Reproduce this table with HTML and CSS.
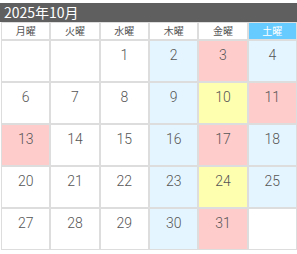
FILE: index.html
```html
<!DOCTYPE html>
<html lang="ja">
<head>
<meta charset="utf-8">
<link rel="stylesheet" href="styles.css">
</head>
<body>
<div class="title">2025年10月</div>
<div class="cal">
  <div class="wd">月曜</div>
  <div class="wd">火曜</div>
  <div class="wd">水曜</div>
  <div class="wd">木曜</div>
  <div class="wd">金曜</div>
  <div class="wd sat">土曜</div>

  <div class="d"></div>
  <div class="d"></div>
  <div class="d">1</div>
  <div class="d blue">2</div>
  <div class="d pink">3</div>
  <div class="d blue">4</div>

  <div class="d">6</div>
  <div class="d">7</div>
  <div class="d">8</div>
  <div class="d blue">9</div>
  <div class="d yellow">10</div>
  <div class="d pink">11</div>

  <div class="d pink">13</div>
  <div class="d">14</div>
  <div class="d">15</div>
  <div class="d blue">16</div>
  <div class="d pink">17</div>
  <div class="d blue">18</div>

  <div class="d">20</div>
  <div class="d">21</div>
  <div class="d">22</div>
  <div class="d blue">23</div>
  <div class="d yellow">24</div>
  <div class="d blue">25</div>

  <div class="d">27</div>
  <div class="d">28</div>
  <div class="d">29</div>
  <div class="d blue">30</div>
  <div class="d pink">31</div>
  <div class="d"></div>
</div>
</body>
</html>
```
FILE: styles.css
```css
html, body {
  margin: 0;
  padding: 0;
  background: #fff;
}
body {
  font-family: "Noto Sans CJK JP", "Noto Sans", sans-serif;
  width: 297px;
}
.title {
  margin-top: 3px;
  height: 19px;
  line-height: 19px;
  background: #5f5f5f;
  color: #fff;
  font-size: 14px;
  padding-left: 4px;
}
.cal {
  display: grid;
  grid-template-columns: repeat(6, 1fr);
  grid-template-rows: 16px repeat(5, 40px);
  gap: 2px;
  padding: 1px;
  background: #dddddd;
  margin-left: 1px;
}
.wd {
  background: #fff;
  color: #555;
  font-size: 10px;
  line-height: 16px;
  text-align: center;
}
.wd.sat {
  background: #66ccff;
  color: #fff;
}
.d {
  background: #fff;
  color: #555;
  font-family: Roboto, "Noto Sans", sans-serif;
  font-size: 14px;
  font-weight: 300;
  line-height: 16px;
  text-align: center;
  padding-top: 6px;
  box-sizing: border-box;
}
.blue { background: #e5f5ff; }
.pink { background: #ffcccc; }
.yellow { background: #ffffb0; }
```
